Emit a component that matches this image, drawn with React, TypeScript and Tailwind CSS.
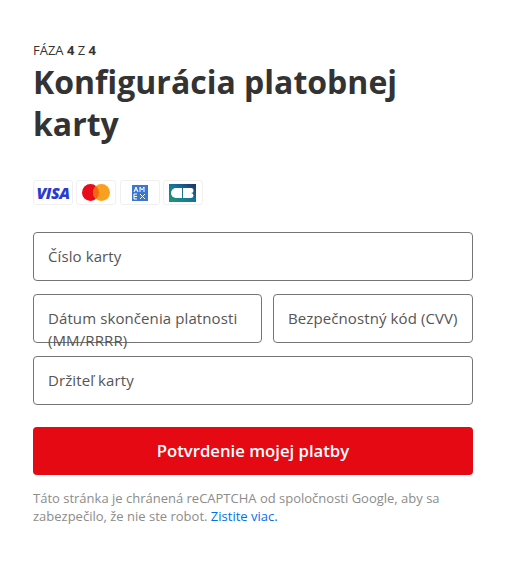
function CardBadge({ children }: { children: React.ReactNode }) {
  return (
    <div className="flex h-[25px] w-10 items-center justify-center rounded-[3px] border border-[#f0f0f0] bg-white">
      {children}
    </div>
  )
}

function Field({ label, className = '' }: { label: string; className?: string }) {
  return (
    <div className={`h-[49px] rounded-[4px] border border-[#757575] bg-white pl-[14px] pt-[12px] text-[15px] leading-[22px] tracking-[0.1px] text-[#555] ${className}`}>
      {label}
    </div>
  )
}

export default function App() {
  return (
    <div className="min-h-[579px] bg-white pl-[33px] pt-[42px] font-['Open_Sans',sans-serif]">
      <div className="w-[440px]">
        <p className="text-[13px] leading-[17px] text-[#333]">
          FÁZA <b>4</b> Z <b>4</b>
        </p>
        <h1 className="mt-[2px] text-[32px] font-bold leading-[42px] text-[#333]">
          Konfigurácia platobnej karty
        </h1>

        {/* Card logos */}
        <div className="mt-[35px] flex gap-[3.3px]">
          <CardBadge>
            <span className="text-[16px] font-extrabold italic leading-none tracking-[-0.5px] text-[#2a3bd0]">VISA</span>
          </CardBadge>
          <CardBadge>
            <svg width="28" height="17" viewBox="0 0 28 17">
              <circle cx="8.5" cy="8.5" r="8.5" fill="#e80b1a" />
              <circle cx="19.5" cy="8.5" r="8.5" fill="#f9a020" />
              <path d="M14 2a8.5 8.5 0 0 1 0 13a8.5 8.5 0 0 1 0-13z" fill="#f5640f" />
            </svg>
          </CardBadge>
          <CardBadge>
            <svg width="16" height="16" viewBox="0 0 16 16">
              <rect width="16" height="16" fill="#3a78d0" />
              <path d="M2 7l2-5 2 5M3 5h2M8 7V2l2 3 2-3v5M14 2v0M2 9v5h3M2 11.5h3M2 9h3M8 9l5 5M13 9l-5 5" stroke="#fff" strokeWidth="1" fill="none" />
            </svg>
          </CardBadge>
          <CardBadge>
            <svg width="27" height="18" viewBox="0 0 27 18">
              <defs>
                <linearGradient id="cb" x1="0" y1="1" x2="1" y2="0">
                  <stop offset="0" stopColor="#1f9a72" />
                  <stop offset="0.55" stopColor="#17709a" />
                  <stop offset="1" stopColor="#1c2f6b" />
                </linearGradient>
              </defs>
              <rect width="27" height="18" fill="url(#cb)" />
              <path d="M13 4h-6a5 5 0 0 0 0 10h6z" fill="#fff" />
              <path d="M14 4h8a2.5 2.5 0 0 1 0 5a2.5 2.5 0 0 1 0 5h-8z" fill="#fff" />
            </svg>
          </CardBadge>
        </div>

        {/* Form */}
        <div className="mt-[27px] flex flex-col gap-[13px]">
          <Field label="Číslo karty" />
          <div className="flex gap-[11px]">
            <Field label="Dátum skončenia platnosti (MM/RRRR)" className="w-[229px]" />
            <Field label="Bezpečnostný kód (CVV)" className="flex-1" />
          </div>
          <Field label="Držiteľ karty" />
        </div>

        <button className="mt-[22px] h-12 w-full rounded-[4px] bg-[#e50914] text-[16.7px] font-semibold text-white">
          Potvrdenie mojej platby
        </button>

        <p className="mt-[14px] text-[13px] leading-[18px] text-[#8c8c8c]">
          Táto stránka je chránená reCAPTCHA od spoločnosti Google, aby sa zabezpečilo, že nie ste robot.{' '}
          <a className="text-[#0071eb]">Zistite viac.</a>
        </p>
      </div>
    </div>
  )
}
